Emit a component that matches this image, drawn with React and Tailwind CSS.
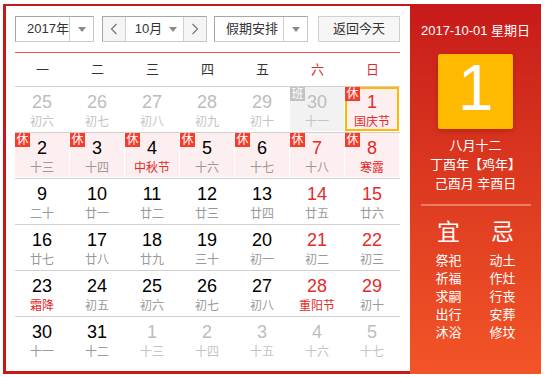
import React from "react";

const WEEK = ["一", "二", "三", "四", "五", "六", "日"];

// o: other month, r: red number, lr: red lunar, rest: 休, work: 班, sel: today
const ROWS = [
  [
    { n: 25, l: "初六", o: 1 }, { n: 26, l: "初七", o: 1 }, { n: 27, l: "初八", o: 1 },
    { n: 28, l: "初九", o: 1 }, { n: 29, l: "初十", o: 1 }, { n: 30, l: "十一", o: 1, work: 1 },
    { n: 1, l: "国庆节", r: 1, lr: 1, rest: 1, sel: 1 },
  ],
  [
    { n: 2, l: "十三", rest: 1 }, { n: 3, l: "十四", rest: 1 }, { n: 4, l: "中秋节", lr: 1, rest: 1 },
    { n: 5, l: "十六", rest: 1 }, { n: 6, l: "十七", rest: 1 }, { n: 7, l: "十八", r: 1, rest: 1 },
    { n: 8, l: "寒露", r: 1, lr: 1, rest: 1 },
  ],
  [
    { n: 9, l: "二十" }, { n: 10, l: "廿一" }, { n: 11, l: "廿二" }, { n: 12, l: "廿三" },
    { n: 13, l: "廿四" }, { n: 14, l: "廿五", r: 1 }, { n: 15, l: "廿六", r: 1 },
  ],
  [
    { n: 16, l: "廿七" }, { n: 17, l: "廿八" }, { n: 18, l: "廿九" }, { n: 19, l: "三十" },
    { n: 20, l: "初一" }, { n: 21, l: "初二", r: 1 }, { n: 22, l: "初三", r: 1 },
  ],
  [
    { n: 23, l: "霜降", lr: 1 }, { n: 24, l: "初五" }, { n: 25, l: "初六" }, { n: 26, l: "初七" },
    { n: 27, l: "初八" }, { n: 28, l: "重阳节", r: 1, lr: 1 }, { n: 29, l: "初十", r: 1 },
  ],
  [
    { n: 30, l: "十一" }, { n: 31, l: "十二" }, { n: 1, l: "十三", o: 1 }, { n: 2, l: "十四", o: 1 },
    { n: 3, l: "十五", o: 1 }, { n: 4, l: "十六", o: 1 }, { n: 5, l: "十七", o: 1 },
  ],
];

const YI = ["祭祀", "祈福", "求嗣", "出行", "沐浴"];
const JI = ["动土", "作灶", "行丧", "安葬", "修坟"];

function Caret() {
  return <span className="inline-block w-0 h-0 border-l-[4px] border-r-[4px] border-t-[5px] border-l-transparent border-r-transparent border-t-[#8a8a8a]" />;
}

function Chevron({ left }) {
  return (
    <svg width="8" height="12" viewBox="0 0 8 12">
      <polyline
        points={left ? "6.5,1 1.5,6 6.5,11" : "1.5,1 6.5,6 1.5,11"}
        fill="none"
        stroke="#777"
        strokeWidth="1.2"
      />
    </svg>
  );
}

function Cell({ d }) {
  let box = "";
  if (d.sel) box = "border-2 border-[#ffb900] bg-[#fdefef] pt-[3px]";
  else if (d.rest) box = "bg-[#fdefef] pt-[5px]";
  else if (d.work) box = "bg-[#f2f2f2] pt-[5px]";
  else box = "pt-[5px]";

  const num = d.o ? "text-[#bdbdbd]" : d.r ? "text-[#e22b2b]" : "text-black";
  const lun = d.o ? "text-[#c4c4c4]" : d.lr ? "text-[#e02a2a]" : "text-[#999]";

  return (
    <div className="relative h-[45px]">
      <div className={`h-[44px] mr-[1px] flex flex-col items-center ${box}`}>
        <span className={`text-[18px] leading-[21px] ${num}`}>{d.n}</span>
        <span className={`text-[12px] leading-[18px] ${lun}`}>{d.l}</span>
      </div>
      {d.rest ? (
        <span className="absolute left-0 top-0 w-[15px] h-[14px] bg-[#f43d2c] text-white text-[12px] leading-[14px] text-center">休</span>
      ) : null}
      {d.work ? (
        <span className="absolute left-0 top-0 w-[15px] h-[14px] bg-[#c2c2c2] text-white text-[12px] leading-[14px] text-center">班</span>
      ) : null}
    </div>
  );
}

export default function App() {
  return (
    <div className="pl-[3px] pt-[4px] font-['Liberation_Sans','Noto_Sans_CJK_SC',sans-serif]">
      <div className="w-[538px] h-[370px] flex border-l-[3px] border-t-2 border-b-[3px] border-[#c9171a] bg-white">
        {/* Left: calendar */}
        <div className="w-[404px] pl-[9px] pr-[10px] pt-[10px]">
          <div className="flex items-center h-[26px] text-[13px] text-[#333]">
            <div className="flex w-[79px] h-[26px] border border-[#c8c8c8] border-t-[#a6a6a6] border-l-[#a6a6a6]">
              <div className="flex-1 flex items-center pl-[11px] border-r border-[#d0d0d0]">2017年</div>
              <div className="w-[23px] flex items-center justify-center"><Caret /></div>
            </div>
            <div className="flex w-[105px] h-[26px] ml-[8px] border border-[#c8c8c8] border-t-[#a6a6a6] border-l-[#a6a6a6]">
              <div className="w-[23px] flex items-center justify-center bg-[#f5f5f5] border-r border-[#d0d0d0]"><Chevron left /></div>
              <div className="flex-1 flex items-center justify-center gap-[7px] pl-[3px] border-r border-[#d0d0d0]">
                <span>10月</span>
                <Caret />
              </div>
              <div className="w-[22px] flex items-center justify-center bg-[#f5f5f5]"><Chevron /></div>
            </div>
            <div className="flex w-[94px] h-[26px] ml-[7px] border border-[#c8c8c8] border-t-[#a6a6a6] border-l-[#a6a6a6]">
              <div className="flex-1 flex items-center pl-[11px] border-r border-[#d0d0d0]">假期安排</div>
              <div className="w-[23px] flex items-center justify-center"><Caret /></div>
            </div>
            <div className="w-[82px] h-[26px] ml-[10px] flex items-center justify-center bg-[#f6f6f6] border border-[#cfcfcf]">返回今天</div>
          </div>

          <div className="mt-[10px] h-px bg-[#f5554c]" />

          <div className="grid grid-cols-7 h-[33px] items-center text-[13px] text-center">
            {WEEK.map((w, i) => (
              <span key={w} className={i > 4 ? "text-[#e22b2b]" : "text-[#333]"}>{w}</span>
            ))}
          </div>

          {ROWS.map((row, ri) => (
            <div key={ri} className="grid grid-cols-7 border-t border-[#d0d0d0]">
              {row.map((d, ci) => (
                <Cell key={ci} d={d} />
              ))}
            </div>
          ))}
        </div>

        {/* Right: today panel */}
        <div className="w-[131px] -mt-[2px] -mb-[3px] bg-linear-to-b from-[#c7191a] to-[#f35427] text-white flex flex-col items-center pt-[18px]">
          <div className="text-[13px] leading-[18px]">2017-10-01 星期日</div>
          <div className="mt-[14px] w-[75px] h-[75px] bg-[#ffb900] rounded-[2px] shadow-[0_2px_4px_rgba(120,20,0,0.35)] flex items-center justify-center pb-[8px]">
            <span className="text-[64px] leading-none">1</span>
          </div>
          <div className="mt-[7px] text-[13px] leading-[19px] text-center">
            <div>八月十二</div>
            <div>丁酉年【鸡年】</div>
            <div>己酉月 辛酉日</div>
          </div>
          <div className="mt-[11px] w-[110px] h-[2px] bg-[#ee7e6c]" />
          <div className="mt-[12px] w-[108px] grid grid-cols-2 text-center">
            <div>
              <div className="text-[23px] leading-[28px]">宜</div>
              <div className="mt-[6px] text-[13px] leading-[18px]">
                {YI.map((t) => <div key={t}>{t}</div>)}
              </div>
            </div>
            <div>
              <div className="text-[23px] leading-[28px]">忌</div>
              <div className="mt-[6px] text-[13px] leading-[18px]">
                {JI.map((t) => <div key={t}>{t}</div>)}
              </div>
            </div>
          </div>
        </div>
      </div>
    </div>
  );
}
